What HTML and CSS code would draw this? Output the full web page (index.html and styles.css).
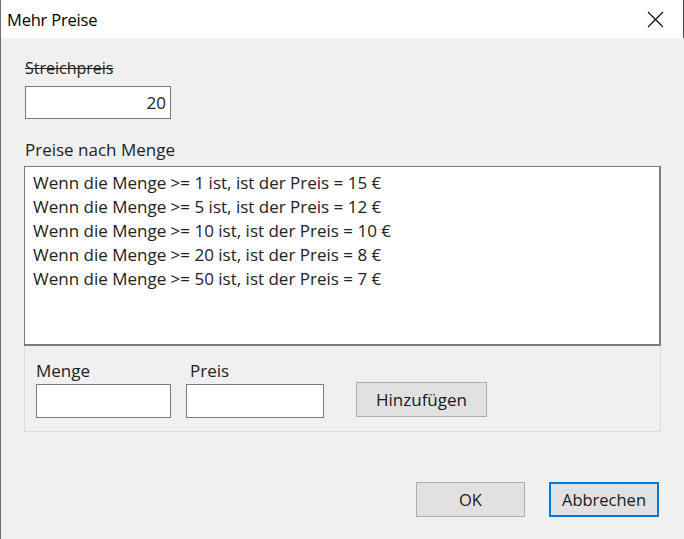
FILE: index.html
```html
<!DOCTYPE html>
<html lang="de">
<head>
  <meta charset="UTF-8">
  <meta name="viewport" content="width=device-width, initial-scale=1.0">
  <title>Mehr Preise</title>
  <link rel="stylesheet" href="styles.css">
</head>
<body>
  <div class="dialog">
    <div class="titlebar">
      <span class="title">Mehr Preise</span>
      <button class="close" aria-label="Schließen">
        <svg width="17" height="17" viewBox="0 0 17 17">
          <path d="M1 1 L16 16 M16 1 L1 16" stroke="#000" stroke-width="1.1" fill="none"/>
        </svg>
      </button>
    </div>

    <div class="content">
      <label class="label strike">Streichpreis</label>
      <input class="field price-field" type="text" value="20">

      <label class="label list-label">Preise nach Menge</label>
      <ul class="list">
        <li>Wenn die Menge &gt;= 1 ist, ist der Preis = 15 €</li>
        <li>Wenn die Menge &gt;= 5 ist, ist der Preis = 12 €</li>
        <li>Wenn die Menge &gt;= 10 ist, ist der Preis = 10 €</li>
        <li>Wenn die Menge &gt;= 20 ist, ist der Preis = 8 €</li>
        <li>Wenn die Menge &gt;= 50 ist, ist der Preis = 7 €</li>
      </ul>

      <div class="panel">
        <div class="group">
          <label class="label small">Menge</label>
          <input class="field qty-field" type="text">
        </div>
        <div class="group">
          <label class="label small preis">Preis</label>
          <input class="field amount-field" type="text">
        </div>
        <button class="btn add">Hinzufügen</button>
      </div>

      <div class="actions">
        <button class="btn ok">OK</button>
        <button class="btn cancel">Abbrechen</button>
      </div>
    </div>
  </div>
</body>
</html>
```

FILE: styles.css
```css
body {
  margin: 0;
  font-family: "Open Sans", "Noto Sans", sans-serif;
  color: #1a1a1a;
  background-color: #f0f0f0;
}
.dialog {
  width: 683px;
  height: 539px;
  border-left: 1px solid #6f6f6f;
  background-color: #f0f0f0;
  overflow: hidden;
}
.titlebar {
  height: 38px;
  background-color: #fff;
  display: flex;
  align-items: center;
  justify-content: space-between;
  padding-left: 6px;
  border-right: 1px solid #4a4a4a;
  box-sizing: border-box;
}
.title {
  font-size: 16.5px;
  color: #000;
  letter-spacing: -0.2px;
}
.close {
  width: 46px;
  height: 38px;
  margin-right: 5px;
  border: none;
  background: transparent;
  display: flex;
  align-items: center;
  justify-content: center;
  padding: 0;
}
.content {
  padding: 20px 23px 0 23px;
}
.label {
  display: block;
  font-size: 17px;
  line-height: 21px;
  color: #222;
}
.strike {
  text-decoration: line-through;
  font-size: 16px;
  margin-left: 1px;
}
.field {
  display: block;
  box-sizing: border-box;
  border: 1px solid #7a7a7a;
  background-color: #fff;
  font-family: inherit;
  font-size: 17px;
  color: #222;
  outline: none;
}
.price-field {
  width: 146px;
  height: 33px;
  margin-top: 7px;
  margin-left: 1px;
  text-align: right;
  padding-right: 4px;
}
.list-label {
  margin-top: 20px;
  margin-left: 1px;
}
.list {
  list-style: none;
  margin: 6px 0 0 0;
  padding: 4px 8px;
  height: 180px;
  width: 637px;
  box-sizing: border-box;
  background-color: #fff;
  border: 1px solid #7d7d7d;
  border-width: 1px 2px 2px 1px;
}
.list li {
  font-size: 17px;
  line-height: 24px;
  color: #222;
}
.panel {
  width: 637px;
  height: 86px;
  box-sizing: border-box;
  border: 1px solid #dcdcdc;
  border-top: none;
  display: flex;
  align-items: flex-start;
  padding: 14px 0 0 11px;
}
.group + .group {
  margin-left: 15px;
}
.small {
  line-height: 21px;
}
.preis {
  margin-left: 4px;
}
.qty-field {
  width: 135px;
  height: 34px;
  margin-top: 3px;
}
.amount-field {
  width: 138px;
  height: 34px;
  margin-top: 3px;
}
.btn {
  box-sizing: border-box;
  background-color: #e1e1e1;
  border: 1px solid #adadad;
  font-family: inherit;
  font-size: 16.5px;
  color: #1a1a1a;
  padding: 0;
}
.add {
  width: 131px;
  height: 35px;
  margin-left: 32px;
  margin-top: 22px;
  font-size: 17px;
}
.actions {
  display: flex;
  justify-content: flex-end;
  gap: 24px;
  margin-top: 50px;
  padding-right: 2px;
}
.ok {
  width: 109px;
  height: 35px;
}
.cancel {
  width: 110px;
  height: 35px;
  border: 2px solid #0078d7;
}
```
